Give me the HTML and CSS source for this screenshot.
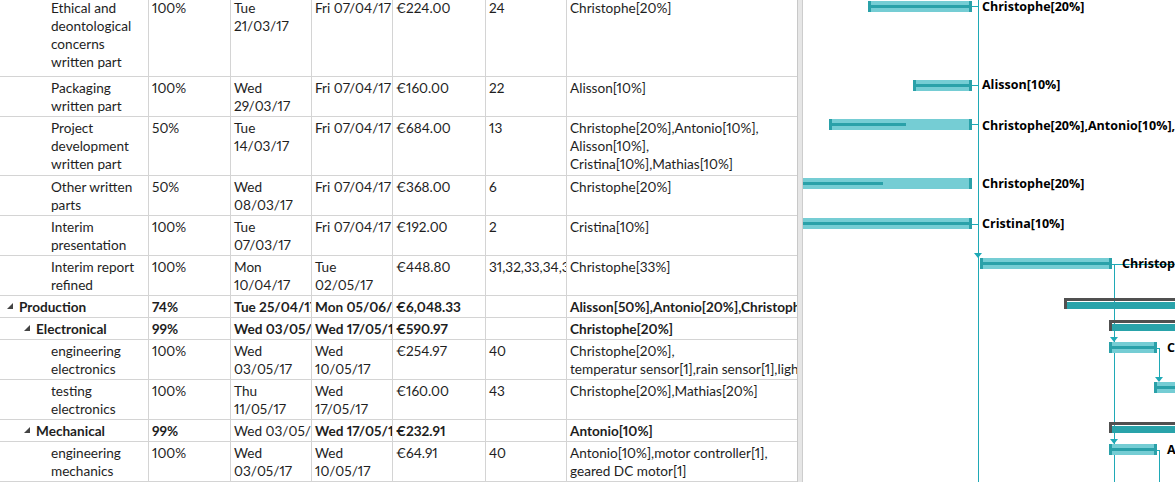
FILE: index.html
```html
<!DOCTYPE html>
<html>
<head>
  <title>Gantt Chart</title>
  <link rel="stylesheet" href="styles.css">
</head>
<body>
  <div class="view">
    <!-- Task sheet -->
    <div class="sheet">
      <div class="cell task">Ethical and<br>deontological<br>concerns<br>written part</div>
      <div class="cell">100%</div>
      <div class="cell">Tue<br>21/03/17</div>
      <div class="cell">Fri 07/04/17</div>
      <div class="cell">€224.00</div>
      <div class="cell">24</div>
      <div class="cell last">Christophe[20%]</div>

      <div class="cell task">Packaging<br>written part</div>
      <div class="cell">100%</div>
      <div class="cell">Wed<br>29/03/17</div>
      <div class="cell">Fri 07/04/17</div>
      <div class="cell">€160.00</div>
      <div class="cell">22</div>
      <div class="cell last">Alisson[10%]</div>

      <div class="cell task">Project<br>development<br>written part</div>
      <div class="cell">50%</div>
      <div class="cell">Tue<br>14/03/17</div>
      <div class="cell">Fri 07/04/17</div>
      <div class="cell">€684.00</div>
      <div class="cell">13</div>
      <div class="cell last">Christophe[20%],Antonio[10%],<br>Alisson[10%],<br>Cristina[10%],Mathias[10%]</div>

      <div class="cell task">Other written<br>parts</div>
      <div class="cell">50%</div>
      <div class="cell">Wed<br>08/03/17</div>
      <div class="cell">Fri 07/04/17</div>
      <div class="cell">€368.00</div>
      <div class="cell">6</div>
      <div class="cell last">Christophe[20%]</div>

      <div class="cell task">Interim<br>presentation</div>
      <div class="cell">100%</div>
      <div class="cell">Tue<br>07/03/17</div>
      <div class="cell">Fri 07/04/17</div>
      <div class="cell">€192.00</div>
      <div class="cell">2</div>
      <div class="cell last">Cristina[10%]</div>

      <div class="cell task">Interim report<br>refined</div>
      <div class="cell">100%</div>
      <div class="cell">Mon<br>10/04/17</div>
      <div class="cell">Tue<br>02/05/17</div>
      <div class="cell">€448.80</div>
      <div class="cell">31,32,33,34,35,36,37</div>
      <div class="cell last">Christophe[33%]</div>

      <!-- Production summary -->
      <div class="cell sum top"><span class="toggle"></span>Production</div>
      <div class="cell sum">74%</div>
      <div class="cell sum">Tue 25/04/17</div>
      <div class="cell sum">Mon 05/06/17</div>
      <div class="cell sum">€6,048.33</div>
      <div class="cell sum"></div>
      <div class="cell sum last">Alisson[50%],Antonio[20%],Christophe[33%]</div>

      <div class="cell sum sub"><span class="toggle"></span>Electronical</div>
      <div class="cell sum">99%</div>
      <div class="cell sum">Wed 03/05/17</div>
      <div class="cell sum">Wed 17/05/17</div>
      <div class="cell sum">€590.97</div>
      <div class="cell sum"></div>
      <div class="cell sum last">Christophe[20%]</div>

      <div class="cell task">engineering<br>electronics</div>
      <div class="cell">100%</div>
      <div class="cell">Wed<br>03/05/17</div>
      <div class="cell">Wed<br>10/05/17</div>
      <div class="cell">€254.97</div>
      <div class="cell">40</div>
      <div class="cell last">Christophe[20%],<br>temperatur sensor[1],rain sensor[1],light sensor[1]</div>

      <div class="cell task">testing<br>electronics</div>
      <div class="cell">100%</div>
      <div class="cell">Thu<br>11/05/17</div>
      <div class="cell">Wed<br>17/05/17</div>
      <div class="cell">€160.00</div>
      <div class="cell">43</div>
      <div class="cell last">Christophe[20%],Mathias[20%]</div>

      <div class="cell sum sub"><span class="toggle"></span>Mechanical</div>
      <div class="cell sum">99%</div>
      <div class="cell">Wed 03/05/17</div>
      <div class="cell sum">Wed 17/05/17</div>
      <div class="cell sum">€232.91</div>
      <div class="cell sum"></div>
      <div class="cell sum last">Antonio[10%]</div>

      <div class="cell task">engineering<br>mechanics</div>
      <div class="cell">100%</div>
      <div class="cell">Wed<br>03/05/17</div>
      <div class="cell">Wed<br>10/05/17</div>
      <div class="cell">€64.91</div>
      <div class="cell">40</div>
      <div class="cell last">Antonio[10%],motor controller[1],<br>geared DC motor[1]</div>
    </div>

    <div class="splitter"></div>

    <!-- Gantt chart, bars placed by date -->
    <div class="chart">
      <!-- link lines -->
      <div class="vline" style="left:175px; top:0; height:482px"></div>
      <div class="vline" style="left:311px; top:264px; height:218px"></div>
      <div class="vline" style="left:356px; top:348px; height:32px"></div>
      <div class="vline" style="left:356px; top:450px; height:32px"></div>
      <div class="hline" style="left:169px; top:6px; width:6px"></div>
      <div class="hline" style="left:169px; top:85px; width:6px"></div>
      <div class="hline" style="left:169px; top:124px; width:6px"></div>
      <div class="hline" style="left:169px; top:224px; width:6px"></div>
      <div class="hline" style="left:309px; top:264px; width:70px"></div>
      <div class="hline" style="left:354px; top:348px; width:3px"></div>
      <div class="hline" style="left:354px; top:450px; width:3px"></div>
      <div class="arrow" style="left:171px; top:253px"></div>
      <div class="arrow" style="left:307px; top:337px"></div>
      <div class="arrow" style="left:352px; top:377px"></div>
      <div class="arrow" style="left:307px; top:439px"></div>

      <!-- task bars -->
      <div class="bar" style="left:65px; top:1px; width:104px"><div class="done" style="width:100%"></div></div>
      <div class="bar" style="left:110px; top:80px; width:59px"><div class="done" style="width:100%"></div></div>
      <div class="bar" style="left:26px; top:119px; width:143px"><div class="done" style="width:54%"></div></div>
      <div class="bar open" style="left:-60px; top:178px; width:229px"><div class="done" style="width:62%"></div></div>
      <div class="bar open" style="left:-60px; top:218px; width:229px"><div class="done" style="width:100%"></div></div>
      <div class="bar" style="left:177px; top:258px; width:132px"><div class="done" style="width:100%"></div></div>
      <div class="bar" style="left:306px; top:342px; width:48px"><div class="done" style="width:100%"></div></div>
      <div class="bar" style="left:351px; top:382px; width:60px"><div class="done" style="width:100%"></div></div>
      <div class="bar" style="left:306px; top:444px; width:48px"><div class="done" style="width:100%"></div></div>

      <!-- summary bars -->
      <div class="summary" style="left:261px; top:298px; width:140px"></div>
      <div class="summary" style="left:306px; top:320px; width:100px"></div>
      <div class="summary" style="left:306px; top:422px; width:100px"></div>

      <!-- resource labels -->
      <div class="label" style="left:179px; top:-2px">Christophe[20%]</div>
      <div class="label" style="left:179px; top:76px">Alisson[10%]</div>
      <div class="label" style="left:179px; top:117px">Christophe[20%],Antonio[10%],Alisson[10%]</div>
      <div class="label" style="left:179px; top:175px">Christophe[20%]</div>
      <div class="label" style="left:179px; top:215px">Cristina[10%]</div>
      <div class="label" style="left:319px; top:255px">Christophe[33%]</div>
      <div class="label" style="left:364px; top:339px">Christophe[20%]</div>
      <div class="label" style="left:364px; top:441px">Antonio[10%]</div>
    </div>
  </div>
</body>
</html>
```
FILE: styles.css
```css
/* Page */
body {
  margin: 0;
  background-color: #fff;
  font-family: "Lato", "Open Sans", sans-serif;
  color: #1e1e1e;
}
.view {
  display: flex;
  width: 1175px;
  height: 482px;
  overflow: hidden;
}
/* Styles for the task sheet */
.sheet {
  flex: none;
  width: 797px;
  margin-top: -3px;
  display: grid;
  grid-template-columns: 149px 82px 81px 81px 93px 81px 230px;
  grid-template-rows: 80px 40px 59px 40px 40px 40px 22px 22px 40px 40px 22px 40px;
  align-self: flex-start;
}
.cell {
  border-right: 1px solid #d4d4d4;
  border-bottom: 1px solid #d4d4d4;
  padding: 2px 0 0 3px;
  font-size: 13.6px;
  line-height: 18px;
  font-variant-numeric: proportional-nums;
  white-space: nowrap;
  overflow: hidden;
}
.cell.last {
  border-right: none;
}
.cell.task {
  padding-left: 51px;
}
.cell.sum {
  font-weight: bold;
}
.cell.top {
  padding-left: 7px;
}
.cell.sub {
  padding-left: 24px;
}
.toggle {
  display: inline-block;
  width: 0;
  height: 0;
  margin: 0 6px 3px 0;
  border-left: 6px solid transparent;
  border-bottom: 6px solid #444;
}
/* Divider between sheet and chart */
.splitter {
  flex: none;
  width: 4px;
  background-color: #e6e6e6;
  border-left: 1px solid #c8c8c8;
  border-right: 1px solid #cdcdcd;
}
/* Styles for the gantt chart */
.chart {
  flex: 1;
  position: relative;
  overflow: hidden;
}
.vline {
  position: absolute;
  width: 1px;
  background-color: #1fa9b6;
}
.hline {
  position: absolute;
  height: 1px;
  background-color: #1fa9b6;
}
.arrow {
  position: absolute;
  width: 0;
  height: 0;
  border-left: 4px solid transparent;
  border-right: 4px solid transparent;
  border-top: 5px solid #1fa9b6;
}
.bar {
  position: absolute;
  height: 11px;
  background-color: #75cdd4;
  box-sizing: border-box;
  border-left: 3px solid #2aa1a9;
  border-right: 3px solid #2aa1a9;
}
.bar.open {
  border-left: none;
}
.bar .done {
  margin-top: 4px;
  height: 3px;
  background-color: #2aa1a9;
}
.summary {
  position: absolute;
  height: 11px;
  box-sizing: border-box;
  border-top: 3px solid #505050;
  border-left: 3px solid #505050;
}
.summary::after {
  content: "";
  display: block;
  margin-top: 1px;
  height: 7px;
  background-color: #29a3aa;
}
.label {
  position: absolute;
  font-family: "Open Sans", sans-serif;
  font-weight: bold;
  font-size: 12.5px;
  line-height: 18px;
  color: #000;
  white-space: nowrap;
}
```
